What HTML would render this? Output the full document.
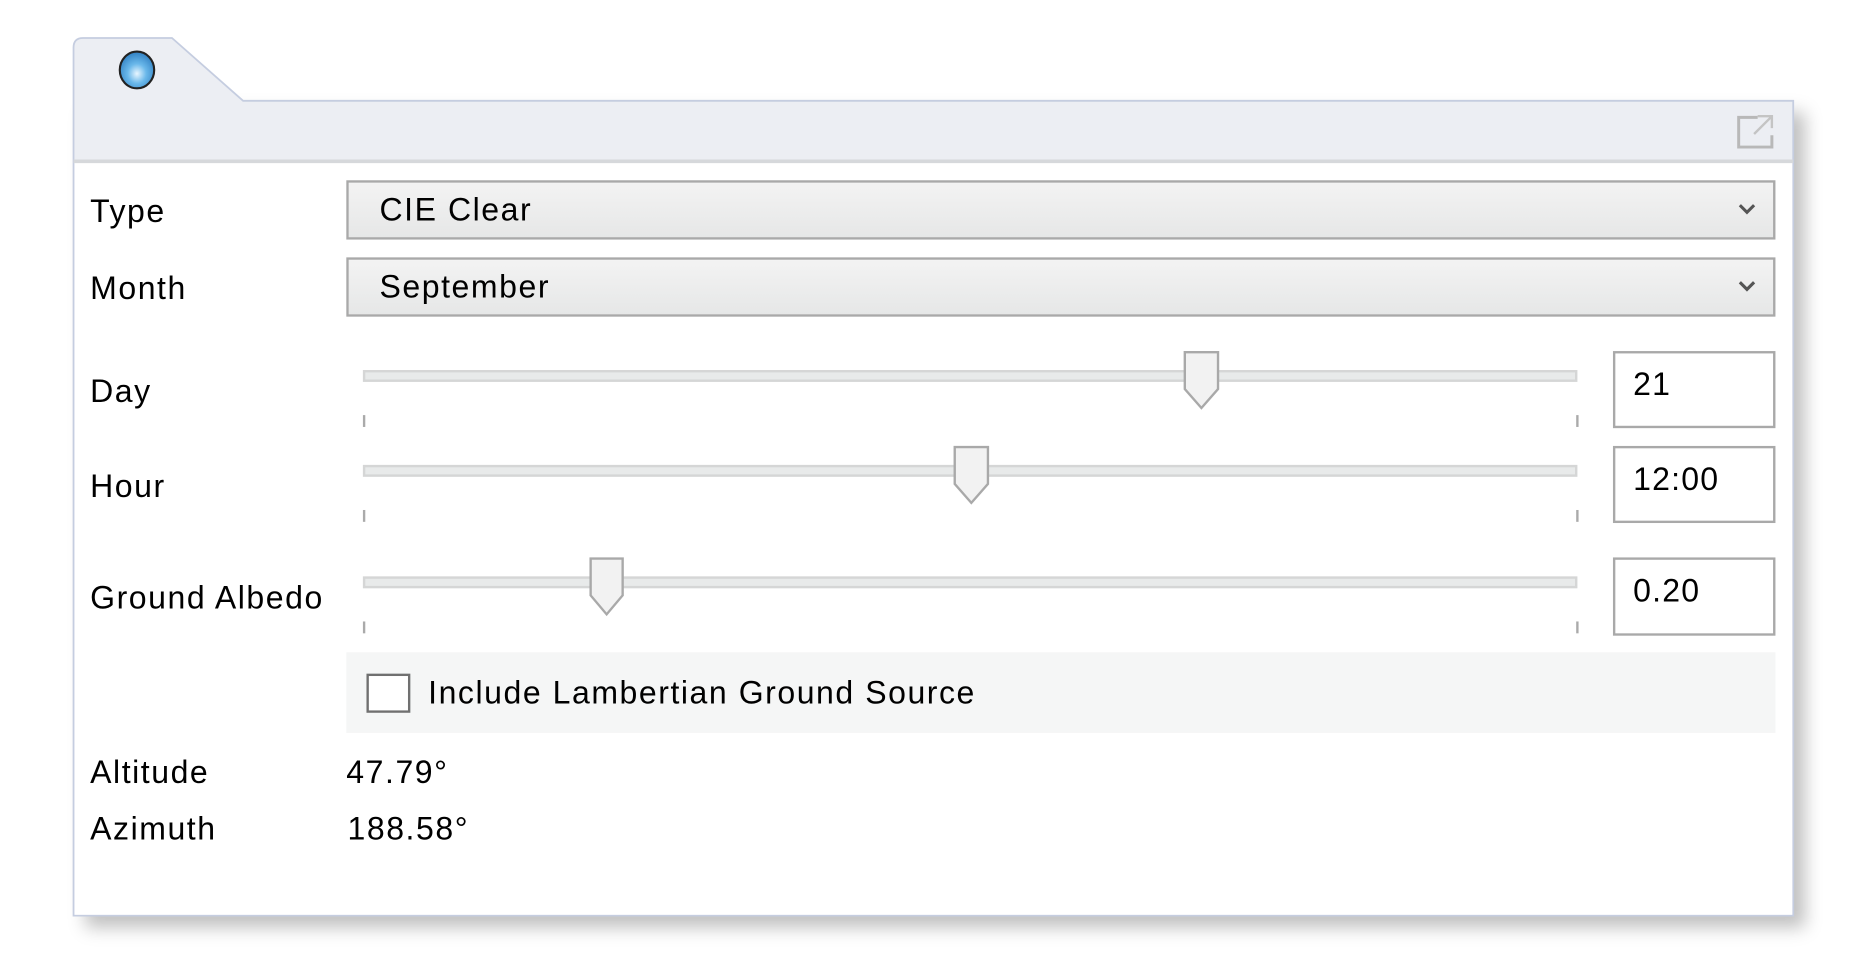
<!DOCTYPE html>
<html><head><meta charset="utf-8"><style>
html,body{margin:0;padding:0;background:#fff;overflow:hidden}
body{width:1860px;height:972px;position:relative}
#s{position:absolute;left:-0.5px;top:0;width:1568px;height:820px;transform:scale(1.186);transform-origin:0 0;font-family:"Liberation Sans",Arial,sans-serif;color:#000}
.a{position:absolute}
.lbl{position:absolute;font-size:27px;line-height:30px;letter-spacing:1.3px;white-space:nowrap}
.dd{position:absolute;left:292px;width:1201px;height:46px;border:2px solid #a9a9a9;background:linear-gradient(#f3f3f3,#e6e7e7);box-sizing:content-box}
.dd span{position:absolute;left:26px;top:8px;font-size:27px;line-height:30px;letter-spacing:1.3px}
.dd svg{position:absolute;right:14px;top:16px}
.trk{position:absolute;left:306px;width:1020px;height:6px;background:#e8eaea;border:2px solid #d5d6d6}
.tk{position:absolute;width:2px;height:10px;background:#aaa}
.inp{position:absolute;left:1360px;width:137px;border:2px solid #a9a9a9;background:#fff;box-sizing:border-box}
.inp span{position:absolute;left:15px;top:11px;font-size:27px;line-height:30px;letter-spacing:1px}
</style></head><body><div id="s">
<div class="a" style="left:62px;top:85px;width:1450px;height:687px;box-shadow:10px 10px 14px rgba(0,0,0,0.25);"></div>
<svg class="a" style="left:0;top:0" width="1568" height="820">
<path d="M62 772 L62 40 Q62 32 70 32 L145 32 L205 85 L1512 85 L1512 772 Z" fill="#eceef3" stroke="#c5cde0" stroke-width="1.5"/>
<rect x="62.8" y="136" width="1448.4" height="635.3" fill="#fff"/>
<line x1="62" y1="136" x2="1512" y2="136" stroke="#d6d8db" stroke-width="3"/>
<defs><radialGradient id="g" cx="50%" cy="60%" r="60%"><stop offset="0" stop-color="#e8f6ff"/><stop offset="0.45" stop-color="#6ab8ea"/><stop offset="1" stop-color="#2f7fc2"/></radialGradient></defs>
<ellipse cx="115.5" cy="59" rx="14.5" ry="15.5" fill="url(#g)" stroke="#222" stroke-width="1.8"/>
<path d="M1482 99 L1466 99 L1466 124 L1494 124 L1494 114" fill="none" stroke="#b8b8b8" stroke-width="2.5"/>
<path d="M1482 98 L1494 98 L1494 108 M1493 99 L1479 113" fill="none" stroke="#c4c4c4" stroke-width="2"/>
</svg>
<div class="lbl" style="left:76px;top:163px">Type</div>
<div class="lbl" style="left:76px;top:228px">Month</div>
<div class="lbl" style="left:76px;top:315px">Day</div>
<div class="lbl" style="left:76px;top:395px">Hour</div>
<div class="lbl" style="left:76px;top:489px">Ground Albedo</div>
<div class="lbl" style="left:76px;top:636px">Altitude</div>
<div class="lbl" style="left:76px;top:684px">Azimuth</div>
<div class="lbl" style="left:292px;top:636px">47.79°</div>
<div class="lbl" style="left:293px;top:684px">188.58°</div>
<div class="dd" style="top:152px"><span>CIE Clear</span><svg width="16" height="12"><path d="M2 3 L8 9 L14 3" fill="none" stroke="#555" stroke-width="2.6"/></svg></div>
<div class="dd" style="top:217px"><span>September</span><svg width="16" height="12"><path d="M2 3 L8 9 L14 3" fill="none" stroke="#555" stroke-width="2.6"/></svg></div>
<div class="trk" style="top:312px"></div>
<div class="trk" style="top:392px"></div>
<div class="trk" style="top:486px"></div>
<div class="tk" style="left:306px;top:350px"></div><div class="tk" style="left:1329px;top:350px"></div>
<div class="tk" style="left:306px;top:430px"></div><div class="tk" style="left:1329px;top:430px"></div>
<div class="tk" style="left:306px;top:524px"></div><div class="tk" style="left:1329px;top:524px"></div>
<svg class="a" style="left:0;top:0" width="1568" height="820">
<g fill="#f2f2f2" stroke="#a9a9a9" stroke-width="2">
<path d="M999 297 L1027 297 L1027 328 L1013 344 L999 328 Z"/>
<path d="M805 377 L833 377 L833 408 L819 424 L805 408 Z"/>
<path d="M498 471 L525 471 L525 502 L511.5 518 L498 502 Z"/>
</g></svg>
<div class="inp" style="top:296px;height:65px"><span>21</span></div>
<div class="inp" style="top:376px;height:65px"><span>12:00</span></div>
<div class="inp" style="top:470px;height:66px"><span>0.20</span></div>
<div class="a" style="left:292px;top:550px;width:1205px;height:68px;background:#f5f6f6"></div>
<div class="a" style="left:309px;top:568px;width:37px;height:33px;border:2px solid #707070;box-sizing:border-box;background:#fff"></div>
<div class="lbl" style="left:361px;top:569px">Include Lambertian Ground Source</div>
</div></body></html>
